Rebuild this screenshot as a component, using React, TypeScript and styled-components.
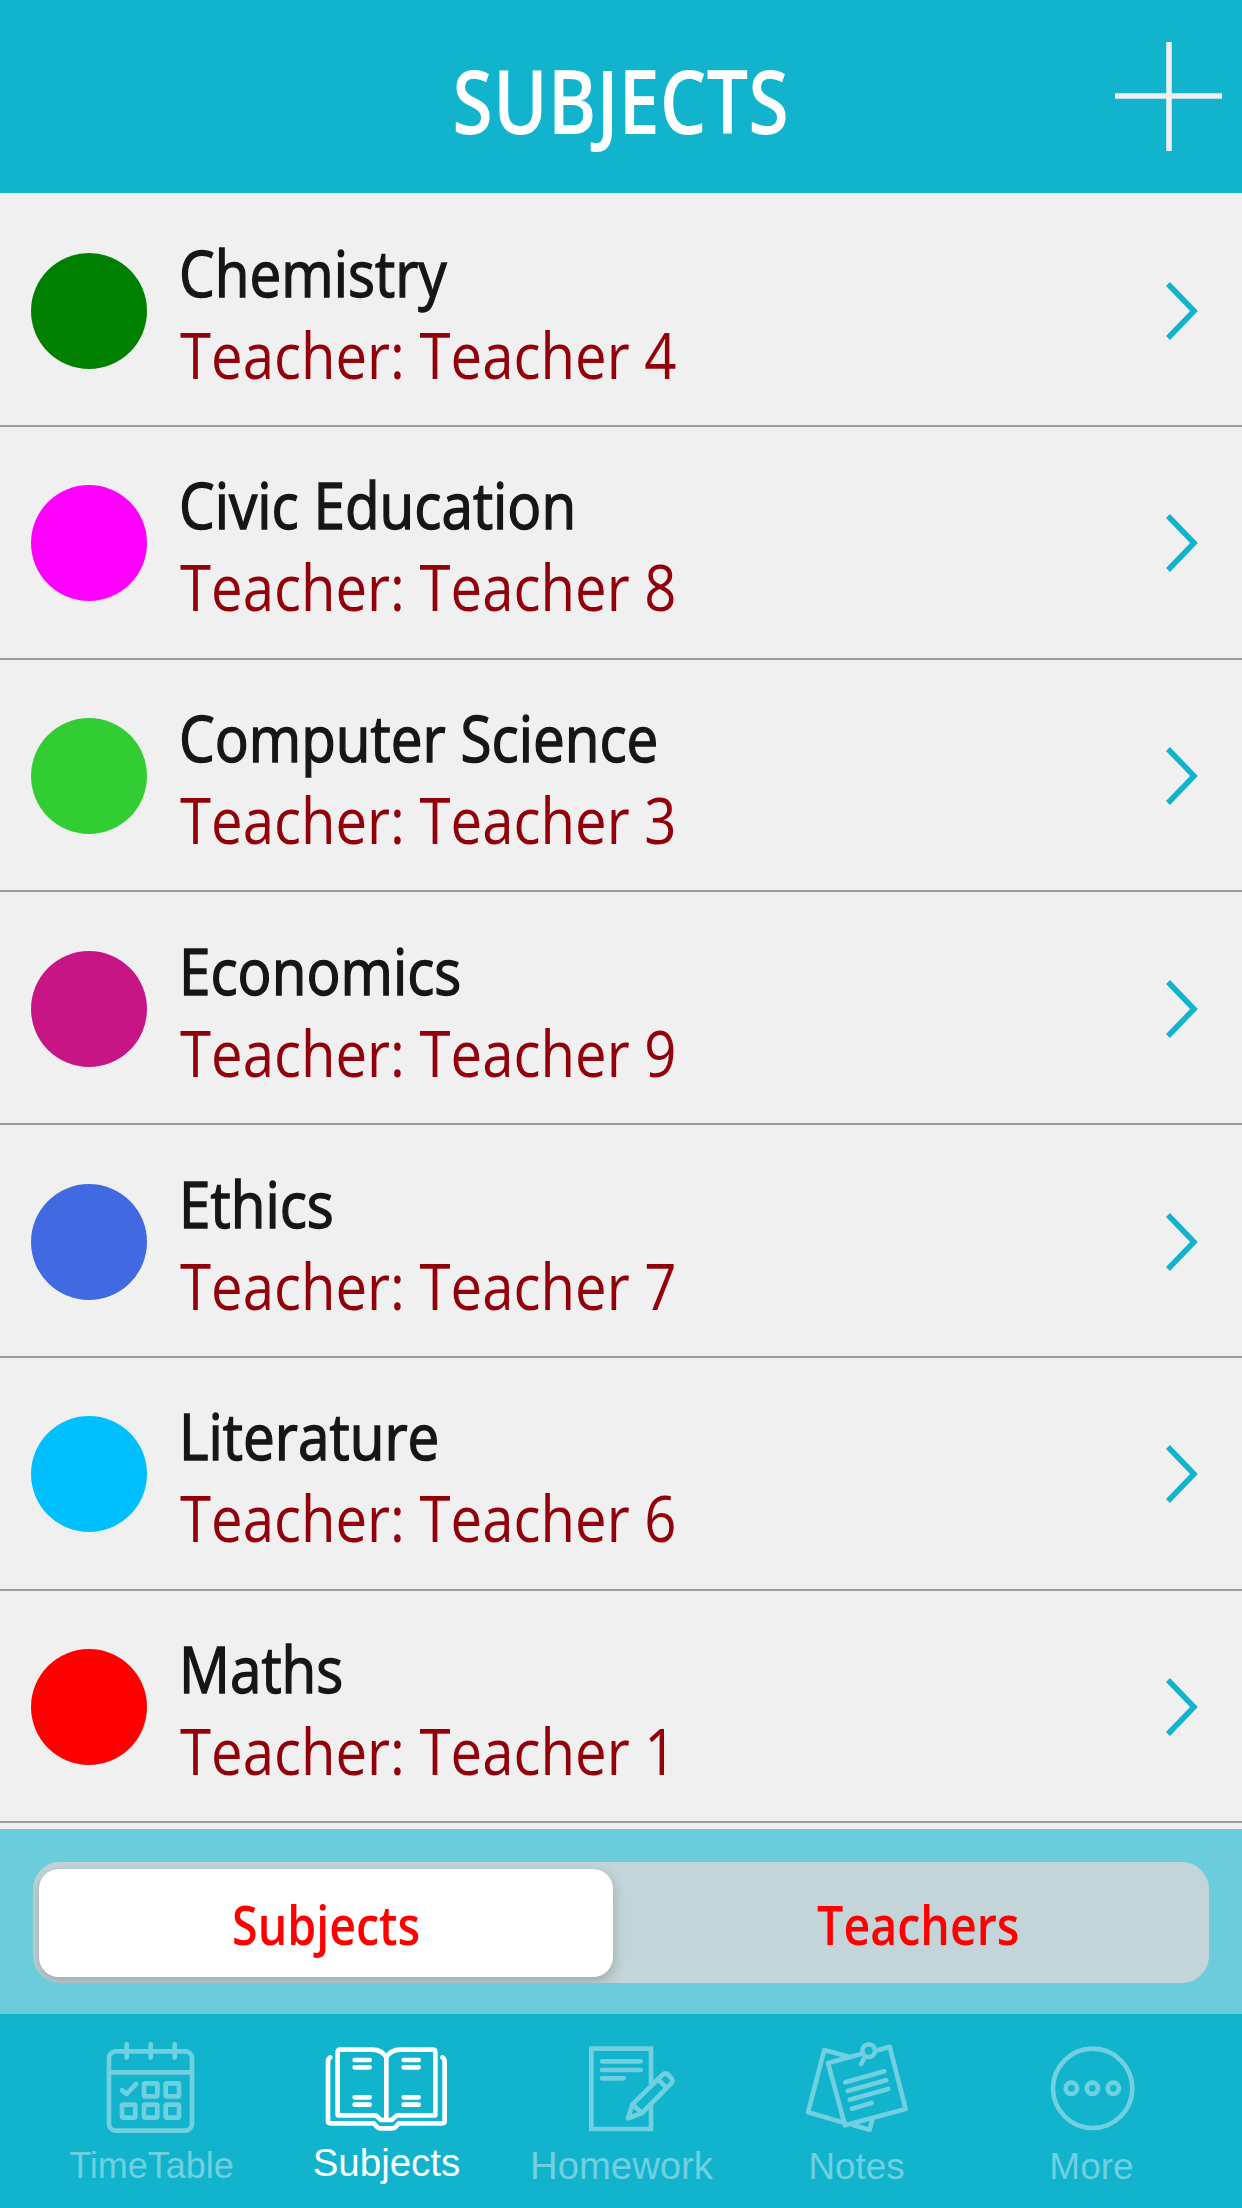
import React from "react";
import styled, { createGlobalStyle } from "styled-components";

const GlobalStyle = createGlobalStyle`
  * { box-sizing: border-box; }
  body { margin: 0; background: #f0f0f0; }
`;

const face = `"Open Sans", "Noto Sans", sans-serif`;

const Screen = styled.div`
  width: 1242px;
  height: 2208px;
  overflow: hidden;
  display: flex;
  flex-direction: column;
  background: #f0f0f0;
  font-family: ${face};
`;

const Header = styled.header`
  height: 193.3px;
  flex: none;
  display: grid;
  grid-template-columns: 1fr auto 1fr;
  background: #12b3cd;
`;

const Title = styled.h1`
  grid-column: 2;
  margin: 40px 0 0;
  font-size: 88px;
  line-height: 120px;
  font-weight: 600;
  color: #fff;
  white-space: nowrap;
  transform: scaleX(0.839);
`;

const AddButton = styled.button`
  justify-self: end;
  width: 107px;
  height: 109px;
  margin: 42px 20px 0 0;
  padding: 0;
  border: 0;
  background: none;
  color: #f0f0f0;
`;

const List = styled.main`
  flex: none;
  height: 1635.7px;
  padding-top: 0.9px;
  overflow: hidden;
`;

const Row = styled.div`
  height: 232.75px;
  display: flex;
  align-items: center;
  padding: 2px 44px 0 31px;
  border-bottom: 2px solid #9a9a9a;
`;

const Dot = styled.span<{ $color: string }>`
  width: 116px;
  height: 116px;
  flex: none;
  border-radius: 50%;
  background: ${(p) => p.$color};
`;

const Lines = styled.div`
  flex: 1;
  height: 164px;
  margin: 6px 0 0 32.5px;
`;

const Line = styled.div<{ $teacher?: boolean }>`
  width: max-content;
  font-size: 63.5px;
  line-height: 82px;
  color: ${(p) => (p.$teacher ? "#920009" : "#161616")};
  -webkit-text-stroke: ${(p) => (p.$teacher ? "0" : "1.4px #161616")};
  white-space: nowrap;
  transform: scaleX(${(p) => (p.$teacher ? 0.887 : 0.892)});
  transform-origin: left;
  margin-left: ${(p) => (p.$teacher ? 0 : -1)}px;
`;

const Chevron = styled.svg`
  width: 34px;
  height: 62px;
  flex: none;
  fill: none;
  stroke: #12b3cd;
  stroke-width: 5.5;
`;

const SegmentBar = styled.section`
  height: 185.5px;
  flex: none;
  padding: 33.3px 33px 0;
  background: #6bcddb;
`;

const Track = styled.div`
  height: 121px;
  display: grid;
  grid-template-columns: 574px 1fr;
  padding: 6.5px 5px 6.5px 6px;
  border-radius: 27px;
  background: #c3d5d8;
  overflow: hidden;
`;

const Segment = styled.button<{ $active?: boolean }>`
  display: flex;
  align-items: center;
  justify-content: center;
  padding: 4px 0 0;
  border: 0;
  border-radius: 20px;
  background: ${(p) => (p.$active ? "#fff" : "transparent")};
  box-shadow: ${(p) => (p.$active ? "0 5px 14px rgba(0,0,0,.22)" : "none")};
  font: 600 53.5px ${face};
  color: #f00;
`;

const SegmentText = styled.span<{ $shift?: number }>`
  display: block;
  margin-left: ${(p) => p.$shift ?? 0}px;
  transform: scaleX(0.87);
`;

const TabBar = styled.nav`
  flex: 1;
  display: grid;
  grid-template-columns: repeat(5, 235px);
  padding: 15.5px 33px 0 34px;
  background: #12b3cd;
`;

const Tab = styled.a<{ $active?: boolean }>`
  display: flex;
  flex-direction: column;
  align-items: center;
  color: ${(p) => (p.$active ? "#fff" : "#70d0e0")};
`;

const TabIcon = styled.svg`
  width: 235px;
  height: 110px;
  flex: none;
  fill: none;
  stroke: currentColor;
  stroke-width: 14;
  stroke-linecap: round;
  stroke-linejoin: round;
`;

const TabLabel = styled.span<{ $size: number; $top: number }>`
  margin-top: ${(p) => p.$top}px;
  font: ${(p) => p.$size}px/44px "Liberation Sans", Arial, sans-serif;
`;

const subjects = [
  { name: "Chemistry", teacher: "Teacher 4", color: "#008000" },
  { name: "Civic Education", teacher: "Teacher 8", color: "#ff00ff" },
  { name: "Computer Science", teacher: "Teacher 3", color: "#32cd32" },
  { name: "Economics", teacher: "Teacher 9", color: "#c71585" },
  { name: "Ethics", teacher: "Teacher 7", color: "#4169e1" },
  { name: "Literature", teacher: "Teacher 6", color: "#00bfff" },
  { name: "Maths", teacher: "Teacher 1", color: "#ff0000" },
];

const tabs = [
  {
    label: "TimeTable", size: 36, top: 4, x: -78,
    icon: (
      <>
        <rect x="147" y="94" width="249" height="238" rx="20" />
        <path d="M147 157H396M200 73V113M272 73V113M344 73V113" />
        <path d="M186 211L200 222L228 192" />
        <rect x="252" y="190" width="40" height="39" rx="4" />
        <rect x="317" y="190" width="40" height="39" rx="4" />
        <rect x="186" y="254" width="40" height="39" rx="4" />
        <rect x="252" y="254" width="40" height="39" rx="4" />
        <rect x="317" y="254" width="40" height="39" rx="4" />
      </>
    ),
  },
  {
    label: "Subjects", size: 38.5, top: 1, x: 627, active: true,
    icon: (
      <>
        <path d="M979 300V112C970 97 958 89 938 89H840Q833 89 833 96V286H947L963 300H995L1011 286H1126V96Q1126 89 1119 89H1020C1000 89 988 97 979 112" />
        <path d="M811 112Q804 116 804 126V303Q804 310 812 310H942L950 320Q954 325 961 325H997Q1004 325 1008 320L1016 310H1146Q1154 310 1154 303V126Q1154 116 1147 112" />
        <path d="M884 120H929M884 142H929M1031 120H1076M1031 142H1076M884 232H929M884 254H929M1031 232H1076M1031 254H1076" />
      </>
    ),
  },
  {
    label: "Homework", size: 38.3, top: 4, x: 12,
    icon: (
      <>
        <path strokeLinejoin="miter" strokeLinecap="butt" d="M453 192V86H274V327H453V254" />
        <path d="M306 124H422M306 150H422M306 175H371" />
        <path d="M384 295L397 253L487 165Q496 156 505 165L513 173Q522 182 513 191L426 279ZM397 253L426 279M474 178L499 203" />
      </>
    ),
  },
  {
    label: "Notes", size: 36.8, top: 5, x: 717,
    icon: (
      <>
        <path d="M1083 102L984 129L1035 316L1217 267L1169 80L1128 92" />
        <path d="M1042 109L973 90L924 277L1035 309M1060 316L1109 329L1117 299" />
        <circle cx="1106" cy="92" r="19" />
        <path d="M1096 110L1083 132M1036 187L1153 154M1043 213L1159 181M1049 239L1165 207M1056 266L1115 249" />
      </>
    ),
  },
  {
    label: "More", size: 37, top: 5, x: -78,
    icon: (
      <>
        <circle cx="278" cy="205" r="119" />
        <circle cx="214" cy="205" r="17" />
        <circle cx="277" cy="205" r="17" />
        <circle cx="340" cy="205" r="17" />
      </>
    ),
  },
];

export default function App() {
  return (
    <Screen>
      <GlobalStyle />
      <Header>
        <Title>SUBJECTS</Title>
        <AddButton aria-label="Add">
          <svg width="107" height="109" viewBox="0 0 107 109" stroke="currentColor" strokeWidth="5.5">
            <path d="M0 54H107M54 0V109" />
          </svg>
        </AddButton>
      </Header>
      <List>
        {subjects.map((s) => (
          <Row key={s.name}>
            <Dot $color={s.color} />
            <Lines>
              <Line>{s.name}</Line>
              <Line $teacher>Teacher: {s.teacher}</Line>
            </Lines>
            <Chevron viewBox="0 0 34 62">
              <path d="M4 4L30 31L4 58" />
            </Chevron>
          </Row>
        ))}
      </List>
      <SegmentBar>
        <Track>
          <Segment $active><SegmentText>Subjects</SegmentText></Segment>
          <Segment><SegmentText $shift={19}>Teachers</SegmentText></Segment>
        </Track>
      </SegmentBar>
      <TabBar>
        {tabs.map((t) => (
          <Tab key={t.label} $active={t.active}>
            <TabIcon viewBox={`${t.x} 30 705 330`}>{t.icon}</TabIcon>
            <TabLabel $size={t.size} $top={t.top}>{t.label}</TabLabel>
          </Tab>
        ))}
      </TabBar>
    </Screen>
  );
}
